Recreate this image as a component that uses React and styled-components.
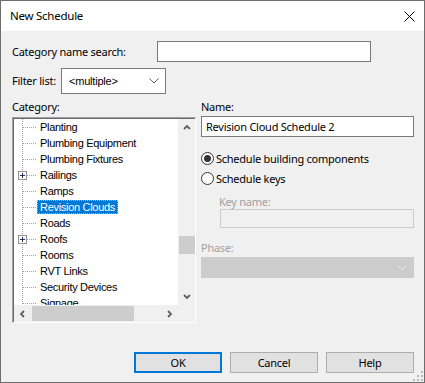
import React from "react";
import styled, { createGlobalStyle, css } from "styled-components";

const Global = createGlobalStyle`
  html, body { margin: 0; padding: 0; background: #f0f0f0; }
  * { box-sizing: border-box; }
`;

const UI = `"Noto Sans", "Open Sans", sans-serif`;
const CLASSIC = `"Liberation Sans", Arial, sans-serif`;

const Window = styled.div`
  position: relative;
  width: 425px;
  height: 383px;
  border: 1px solid #6d6d6d;
  background: #f0f0f0;
  display: flex;
  flex-direction: column;
  font-family: ${UI};
  font-size: 11px;
  letter-spacing: -0.25px;
  color: #000;
`;

const TitleBar = styled.div`
  height: 30px;
  flex: none;
  background: #fff;
  display: flex;
  align-items: center;
  justify-content: space-between;
  padding: 0 9px 0 9px;
`;

const Title = styled.span`
  line-height: 16px;
  font-size: 11.5px;
`;

const Body = styled.div`
  flex: 1;
  display: flex;
  flex-direction: column;
  padding: 10px 10px 9px 11px;
`;

const Row = styled.div`
  display: flex;
  align-items: center;
  height: ${(p) => p.$h}px;
  margin-top: ${(p) => p.$mt || 0}px;
`;

const Label = styled.span`
  display: block;
  width: ${(p) => (p.$w ? `${p.$w}px` : "auto")};
  flex: none;
  line-height: ${(p) => p.$lh || 16}px;
  color: ${(p) => (p.$disabled ? "#a0a0a0" : "#000")};
  margin-left: ${(p) => p.$ml || 0}px;
  margin-top: ${(p) => p.$mt || 0}px;
  white-space: nowrap;
`;

const TextBox = styled.div`
  width: ${(p) => p.$w}px;
  height: ${(p) => p.$h}px;
  flex: none;
  border: 1px solid ${(p) => (p.$disabled ? "#cccccc" : "#7a7a7a")};
  background: ${(p) => (p.$disabled ? "#f0f0f0" : "#fff")};
  margin-left: ${(p) => p.$ml || 0}px;
  margin-top: ${(p) => p.$mt || 0}px;
  padding-left: 4px;
  display: flex;
  align-items: center;
  line-height: 16px;
`;

const Combo = styled.div`
  width: ${(p) => p.$w}px;
  height: ${(p) => p.$h}px;
  flex: none;
  border: 1px solid ${(p) => (p.$disabled ? "#cccccc" : "#7a7a7a")};
  background: ${(p) => (p.$disabled ? "#cccccc" : "#fff")};
  margin-top: ${(p) => p.$mt || 0}px;
  display: flex;
  align-items: center;
  justify-content: space-between;
  padding: 0 6px 0 7px;
  font-family: ${CLASSIC};
  font-size: 11px;
  letter-spacing: -0.2px;
`;

const Main = styled.div`
  margin-top: 5px;
  display: grid;
  grid-template-columns: 184px 213px;
  column-gap: 5px;
`;

const Column = styled.div`
  display: flex;
  flex-direction: column;
  align-items: flex-start;
`;

const TreeBox = styled.div`
  margin-top: 2px;
  width: 184px;
  height: 206px;
  border-top: 1px solid #a0a0a0;
  border-left: 1px solid #a0a0a0;
  border-right: 1px solid #ffffff;
  border-bottom: 1px solid #ffffff;
  box-shadow: inset 1px 1px 0 #696969;
  padding: 1px 0 0 1px;
  display: grid;
  grid-template-columns: 1fr 17px;
  grid-template-rows: 1fr 17px;
  background: #fff;
`;

const TreeList = styled.div`
  overflow: hidden;
  background: #fff;
  font-family: ${CLASSIC};
  font-size: 11px;
  letter-spacing: -0.3px;
`;

const TreeRow = styled.div`
  display: flex;
  align-items: center;
  height: 16px;
`;

const ItemText = styled.span`
  line-height: 12px;
  padding: 0 2px;
  border: 1px dotted transparent;
  white-space: nowrap;
  ${(p) =>
    p.$selected &&
    css`
      background: #0078d7;
      color: #fff;
      border-color: #f6a34a;
    `}
`;

const VScroll = styled.div`
  background: #f0f0f0;
  display: flex;
  flex-direction: column;
`;

const HScroll = styled.div`
  background: #f0f0f0;
  display: flex;
`;

const Corner = styled.div`
  background: #f0f0f0;
`;

const ArrowBtn = styled.div`
  width: 17px;
  height: 17px;
  flex: none;
  display: flex;
  align-items: center;
  justify-content: center;
`;

const VTrack = styled.div`
  flex: 1;
  display: flex;
  flex-direction: column;
  align-items: center;
`;

const HTrack = styled.div`
  flex: 1;
  display: flex;
  align-items: center;
`;

const VThumb = styled.div`
  width: 16px;
  height: 18px;
  background: #cdcdcd;
`;

const HThumb = styled.div`
  height: 15px;
  background: #cdcdcd;
`;

const RadioRow = styled.div`
  display: flex;
  align-items: center;
  height: 20px;
  margin-top: ${(p) => p.$mt || 0}px;
`;

const RadioCircle = styled.span`
  width: 13px;
  height: 13px;
  border-radius: 50%;
  border: 1px solid #333;
  background: #fff;
  display: flex;
  align-items: center;
  justify-content: center;
  margin-right: 2px;
  &::after {
    content: "";
    width: 7px;
    height: 7px;
    border-radius: 50%;
    background: ${(p) => (p.$checked ? "#333" : "transparent")};
  }
`;

const Buttons = styled.div`
  margin-top: auto;
  display: flex;
  justify-content: flex-end;
  gap: 8px;
`;

const Button = styled.div`
  width: 88px;
  height: 21px;
  display: flex;
  align-items: center;
  justify-content: center;
  background: #e1e1e1;
  border: ${(p) => (p.$default ? "2px solid #0078d7" : "1px solid #adadad")};
  line-height: 16px;
`;

const Grip = styled.svg`
  position: absolute;
  right: 1px;
  bottom: 1px;
`;

const Chevron = ({ color = "#606060" }) => (
  <svg width="10" height="6" viewBox="0 0 10 6">
    <polyline points="0.5,0.5 5,5 9.5,0.5" fill="none" stroke={color} strokeWidth="1" />
  </svg>
);

const ScrollArrow = ({ dir }) => {
  const pts = {
    up: "1,5 4,2 7,5",
    down: "1,2 4,5 7,2",
    left: "5,1 2,4 5,7",
    right: "2,1 5,4 2,7",
  }[dir];
  return (
    <svg width="8" height="8" viewBox="0 0 8 8">
      <polyline points={pts} fill="none" stroke="#606060" strokeWidth="1.8" />
    </svg>
  );
};

const Connector = ({ expandable }) => (
  <svg width="23" height="16" viewBox="0 0 23 16" style={{ flex: "none" }}>
    <line x1="8.5" y1="0" x2="8.5" y2="16" stroke="#a0a0a0" strokeDasharray="1 1" />
    <line x1={expandable ? 13 : 9} y1="8.5" x2="23" y2="8.5" stroke="#a0a0a0" strokeDasharray="1 1" />
    {expandable && (
      <g>
        <rect x="4.5" y="4.5" width="8" height="8" fill="#fff" stroke="#919191" />
        <line x1="6" y1="8.5" x2="11" y2="8.5" stroke="#1f2f5f" />
        <line x1="8.5" y1="6" x2="8.5" y2="11" stroke="#1f2f5f" />
      </g>
    )}
  </svg>
);

const items = [
  { t: "Planting" },
  { t: "Plumbing Equipment" },
  { t: "Plumbing Fixtures" },
  { t: "Railings", plus: true },
  { t: "Ramps" },
  { t: "Revision Clouds", sel: true },
  { t: "Roads" },
  { t: "Roofs", plus: true },
  { t: "Rooms" },
  { t: "RVT Links" },
  { t: "Security Devices" },
  { t: "Signage" },
];

export default function App() {
  return (
    <>
      <Global />
      <Window>
        <TitleBar>
          <Title>New Schedule</Title>
          <svg width="11" height="11" viewBox="0 0 11 11">
            <path d="M0.5 0.5 L10.5 10.5 M10.5 0.5 L0.5 10.5" stroke="#000" strokeWidth="1" />
          </svg>
        </TitleBar>
        <Body>
          <Row $h={21}>
            <Label $w={145}>Category name search:</Label>
            <TextBox $w={214} $h={21} />
          </Row>
          <Row $h={26} $mt={6}>
            <Label $w={49}>Filter list:</Label>
            <Combo $w={105} $h={26}>
              <span>&lt;multiple&gt;</span>
              <Chevron />
            </Combo>
          </Row>
          <Main>
            <Column>
              <Label>Category:</Label>
              <TreeBox>
                <TreeList>
                  {items.map((it) => (
                    <TreeRow key={it.t}>
                      <Connector expandable={it.plus} />
                      <ItemText $selected={it.sel}>{it.t}</ItemText>
                    </TreeRow>
                  ))}
                </TreeList>
                <VScroll>
                  <ArrowBtn>
                    <ScrollArrow dir="up" />
                  </ArrowBtn>
                  <VTrack>
                    <VThumb style={{ marginTop: 100 }} />
                  </VTrack>
                  <ArrowBtn>
                    <ScrollArrow dir="down" />
                  </ArrowBtn>
                </VScroll>
                <HScroll>
                  <ArrowBtn>
                    <ScrollArrow dir="left" />
                  </ArrowBtn>
                  <HTrack>
                    <HThumb style={{ width: 102, marginLeft: 1 }} />
                  </HTrack>
                  <ArrowBtn>
                    <ScrollArrow dir="right" />
                  </ArrowBtn>
                </HScroll>
                <Corner />
              </TreeBox>
            </Column>
            <Column>
              <Label>Name:</Label>
              <TextBox $w={213} $h={21} $mt={1}>
                Revision Cloud Schedule 2
              </TextBox>
              <RadioRow $mt={11}>
                <RadioCircle $checked />
                Schedule building components
              </RadioRow>
              <RadioRow>
                <RadioCircle />
                Schedule keys
              </RadioRow>
              <Label $disabled $lh={14} $ml={18} $mt={7}>
                Key name:
              </Label>
              <TextBox $disabled $w={194} $h={19} $ml={19} />
              <Label $disabled $mt={12}>
                Phase:
              </Label>
              <Combo $disabled $w={213} $h={21} $mt={1}>
                <span />
                <Chevron color="#e8e8e8" />
              </Combo>
            </Column>
          </Main>
          <Buttons>
            <Button $default>OK</Button>
            <Button>Cancel</Button>
            <Button>Help</Button>
          </Buttons>
        </Body>
        <Grip width="10" height="10" viewBox="0 0 10 10">
          <g fill="#bcbcbc">
            <rect x="8" y="0" width="2" height="2" />
            <rect x="4" y="4" width="2" height="2" />
            <rect x="8" y="4" width="2" height="2" />
            <rect x="0" y="8" width="2" height="2" />
            <rect x="4" y="8" width="2" height="2" />
            <rect x="8" y="8" width="2" height="2" />
          </g>
        </Grip>
      </Window>
    </>
  );
}
